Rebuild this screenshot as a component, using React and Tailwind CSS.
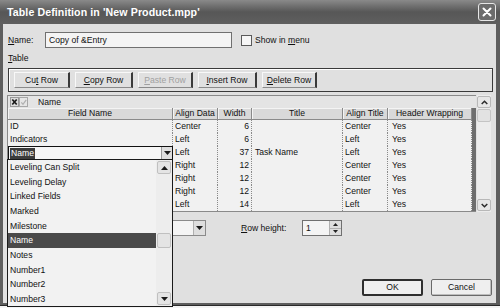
import React from "react";

const colW = ["w-[165px]", "w-[45px]", "w-[34px]", "w-[91px]", "w-[45px]", "w-[84px]"];
const colAlign = [
  "justify-start pl-[2px]",
  "justify-start pl-[2px]",
  "justify-end pr-[2px]",
  "justify-start pl-[3px]",
  "justify-start pl-[2px]",
  "justify-start pl-[4px]",
];
const headers = ["Field Name", "Align Data", "Width", "Title", "Align Title", "Header Wrapping"];
const rows = [
  ["ID", "Center", "6", "", "Center", "Yes"],
  ["Indicators", "Left", "6", "", "Left", "Yes"],
  ["Name", "Left", "37", "Task Name", "Left", "Yes"],
  ["", "Right", "12", "", "Center", "Yes"],
  ["", "Right", "12", "", "Center", "Yes"],
  ["", "Right", "12", "", "Center", "Yes"],
  ["", "Left", "14", "", "Left", "Yes"],
];
const listItems = [
  "Leveling Can Split",
  "Leveling Delay",
  "Linked Fields",
  "Marked",
  "Milestone",
  "Name",
  "Notes",
  "Number1",
  "Number2",
  "Number3",
];

function Tri({ up }) {
  return (
    <svg width="7" height="4" viewBox="0 0 7 4">
      <path d={up ? "M0 4 L3.5 0 L7 4 Z" : "M0 0 L3.5 4 L7 0 Z"} fill="#1a1a1a" />
    </svg>
  );
}

function Chev({ up }) {
  return (
    <svg width="7" height="5" viewBox="0 0 7 5">
      <path
        d={up ? "M0.7 4 L3.5 1.2 L6.3 4" : "M0.7 1 L3.5 3.8 L6.3 1"}
        stroke="#2a2a2a"
        strokeWidth="1.5"
        fill="none"
      />
    </svg>
  );
}

function ToolBtn({ children, w, disabled }) {
  return (
    <div
      className={`${w} h-[16px] flex items-center justify-center border-t border-l border-t-[#f8f8f8] border-l-[#f8f8f8] border-r-2 border-r-[#3a3a3a] border-b border-b-[#8a8a8a] ${
        disabled ? "text-[#a0a0a0]" : "text-[#111]"
      }`}
    >
      {children}
    </div>
  );
}

export default function App() {
  return (
    <div className="w-[500px] h-[308px] bg-[#f4f4f4] relative overflow-hidden font-['Liberation_Sans',Arial,sans-serif] text-[8.6px] text-[#111]">
      {/* dialog */}
      <div className="w-[500px] h-[306px] flex flex-col bg-[#5e5e5e] border-b border-b-[#2a2a2a]">
        {/* title bar */}
        <div className="h-[24px] shrink-0 flex items-center justify-between pl-[7px] pr-[4px] bg-linear-to-b from-[#8a8a8a] via-[#575757] to-[#5f5f5f]">
          <span className="text-white font-bold text-[10.6px] leading-none tracking-[0.1px]">
            Table Definition in 'New Product.mpp'
          </span>
          <div className="w-[18px] h-[18px] rounded-[3px] border border-[#e6e6e6] bg-[#6c6c6c] flex items-center justify-center">
            <svg width="10" height="10" viewBox="0 0 10 10">
              <path d="M1.5 1.5 L8.5 8.5 M8.5 1.5 L1.5 8.5" stroke="white" strokeWidth="2" strokeLinecap="round" />
            </svg>
          </div>
        </div>

        {/* body */}
        <div className="flex-1 ml-[3px] mr-[4px] mb-[2px] bg-[#e0e0e0] flex flex-col pl-[5px] pr-[3px]">
          {/* name row */}
          <div className="mt-[8px] h-[16px] flex items-center">
            <span className="w-[37px]">
              <span className="underline">N</span>ame:
            </span>
            <div className="w-[187px] h-[16px] border border-[#707070] bg-[#f4f4f4] flex items-center pl-[3px]">
              Copy of &amp;Entry
            </div>
            <div className="ml-[9px] w-[11px] h-[11px] border border-[#5a5a5a] bg-[#f6f6f6]" />
            <span className="ml-[3px]">
              Show in <span className="underline">m</span>enu
            </span>
          </div>

          {/* Table label */}
          <div className="mt-[5px] h-[10px] leading-[10px]">
            <span className="underline">T</span>able
          </div>

          {/* toolbar */}
          <div className="mt-[5px] h-[24px] border border-[#3a3a3a] shadow-[inset_1px_1px_0_#ffffff] flex items-center gap-[5px] pl-[5px]">
            <ToolBtn w="w-[56px]">
              Cu<span className="underline">t</span>&nbsp;Row
            </ToolBtn>
            <ToolBtn w="w-[58px]">
              <span className="underline">C</span>opy Row
            </ToolBtn>
            <ToolBtn w="w-[55px]" disabled>
              <span className="underline">P</span>aste Row
            </ToolBtn>
            <ToolBtn w="w-[59px]">
              <span className="underline">I</span>nsert Row
            </ToolBtn>
            <ToolBtn w="w-[55px]">
              <span className="underline">D</span>elete Row
            </ToolBtn>
          </div>

          {/* grid */}
          <div className="mt-[3px] ml-[-1px] w-[484px] h-[117px] flex gap-[1px]">
            <div className="w-[469px] border border-[#8a8a8a] border-r-0 flex flex-col">
              {/* entry bar */}
              <div className="h-[12px] flex items-center bg-[#e4e4e4]">
                <svg width="18" height="10" viewBox="0 0 18 10" className="ml-[2px]">
                  <rect x="0.5" y="0.5" width="8" height="9" fill="#dcdcdc" stroke="#9a9a9a" />
                  <path d="M2.3 2.5 L6.7 7.5 M6.7 2.5 L2.3 7.5" stroke="#1a1a1a" strokeWidth="1.7" />
                  <rect x="9.5" y="0.5" width="8" height="9" fill="#e6e6e6" stroke="#a8a8a8" />
                  <path d="M11.3 5.3 L13 7.3 L16.2 2.8" stroke="#b0b0b0" strokeWidth="1.2" fill="none" />
                </svg>
                <span className="ml-[10px]">Name</span>
              </div>
              {/* header */}
              <div className="h-[12px] flex">
                {headers.map((h, i) => (
                  <div
                    key={h}
                    className={`${colW[i]} h-full flex items-center justify-center bg-[#d9d9d9] border-r border-b border-[#8a8a8a] shadow-[inset_1px_1px_0_#f4f4f4]`}
                  >
                    {h}
                  </div>
                ))}
                <div className="w-[4px] h-full bg-[#6e6e6e]" />
              </div>
              {/* rows */}
              <div className="flex-1 flex flex-col">
                {rows.map((r, ri) => (
                  <div key={ri} className="h-[13px] flex">
                    {r.map((c, ci) =>
                      ri === 2 && ci === 0 ? (
                        <div
                          key={ci}
                          className={`${colW[ci]} h-[14px] border border-[#111] bg-[#f6f6f6] flex items-center`}
                        >
                          <span className="ml-[1px] px-[1px] bg-[#3c3c3c] text-white leading-[11px]">Name</span>
                          <div className="ml-auto w-[11px] h-[12px] bg-[#dedede] border-l border-[#9a9a9a] flex items-center justify-center">
                            <Tri />
                          </div>
                        </div>
                      ) : (
                        <div
                          key={ci}
                          className={`${colW[ci]} h-full flex items-center bg-[#f1f1f1] border-r border-dotted border-r-[#8a8a8a] ${colAlign[ci]}`}
                        >
                          {c}
                        </div>
                      )
                    )}
                    <div className="w-[4px] h-full bg-[#6e6e6e]" />
                  </div>
                ))}
                <div className="flex-1 flex">
                  <div className="w-[464px] bg-[#f1f1f1]" />
                  <div className="w-[4px] bg-[#6e6e6e]" />
                </div>
              </div>
            </div>
            {/* scrollbar */}
            <div className="w-[14px] h-full bg-[#ececec] flex flex-col">
              <div className="h-[12px] mt-[1px] border border-[#b8b8b8] rounded-[2px] bg-[#e6e6e6] flex items-center justify-center">
                <Chev up />
              </div>
              <div className="h-[13px] mt-[1px] border border-[#c4c4c4] rounded-[2px] bg-[#e2e2e2]" />
              <div className="flex-1" />
              <div className="h-[12px] mb-[1px] border border-[#b8b8b8] rounded-[2px] bg-[#e6e6e6] flex items-center justify-center">
                <Chev />
              </div>
            </div>
          </div>

          {/* date format (hidden behind list) / row height row */}
          <div className="mt-[8px] h-[16px] flex items-center">
            <div className="w-[72px]" />
            <div className="w-[126px] h-[16px] border border-[#8a8a8a] bg-[#f4f4f4] flex items-center justify-end">
              <div className="w-[12px] h-[14px] bg-[#dedede] border-l border-[#b0b0b0] flex items-center justify-center">
                <Tri />
              </div>
            </div>
            <span className="ml-[35px] w-[61px]">
              <span className="underline">R</span>ow height:
            </span>
            <div className="w-[40px] h-[16px] border border-[#707070] bg-[#f4f4f4] flex items-center">
              <span className="pl-[3px]">1</span>
              <div className="ml-auto w-[12px] h-full flex flex-col border-l border-[#b0b0b0]">
                <div className="flex-1 bg-[#dedede] border-b border-[#b0b0b0] flex items-center justify-center">
                  <svg width="5" height="3" viewBox="0 0 5 3">
                    <path d="M0 3 L2.5 0 L5 3 Z" fill="#222" />
                  </svg>
                </div>
                <div className="flex-1 bg-[#dedede] flex items-center justify-center">
                  <svg width="5" height="3" viewBox="0 0 5 3">
                    <path d="M0 0 L2.5 3 L5 0 Z" fill="#222" />
                  </svg>
                </div>
              </div>
            </div>
          </div>

          {/* OK / Cancel */}
          <div className="mt-[43px] flex justify-end gap-[8px] pr-[1px]">
            <div className="w-[61px] h-[17px] border-2 border-[#2e2e2e] rounded-[2px] bg-[#efefef] flex items-center justify-center">
              OK
            </div>
            <div className="w-[61px] h-[17px] border border-[#6a6a6a] rounded-[2px] bg-[#efefef] shadow-[inset_-1px_-1px_0_#bdbdbd] flex items-center justify-center">
              Cancel
            </div>
          </div>
        </div>
      </div>

      {/* dropdown list overlay */}
      <div className="absolute left-[7px] top-[159px] w-[166px] h-[148px] border border-[#1a1a1a] bg-[#f2f2f2] flex">
        <div className="flex-1 flex flex-col">
          {listItems.map((it) => (
            <div
              key={it}
              className={`h-[14.7px] shrink-0 flex items-center pl-[2px] ${
                it === "Name" ? "bg-[#4a4a4a] text-white" : ""
              }`}
            >
              {it}
            </div>
          ))}
        </div>
        <div className="w-[16px] flex flex-col bg-[#ededed]">
          <div className="h-[13px] mx-[1px] mt-[1px] border border-[#c0c0c0] rounded-[2px] bg-[#e4e4e4] flex items-center justify-center">
            <Tri up />
          </div>
          <div className="h-[59px]" />
          <div className="h-[15px] mx-[1px] border border-[#c0c0c0] rounded-[2px] bg-[#e4e4e4]" />
          <div className="flex-1" />
          <div className="h-[13px] mx-[1px] mb-[1px] border border-[#c0c0c0] rounded-[2px] bg-[#e4e4e4] flex items-center justify-center">
            <Tri />
          </div>
        </div>
      </div>
    </div>
  );
}
